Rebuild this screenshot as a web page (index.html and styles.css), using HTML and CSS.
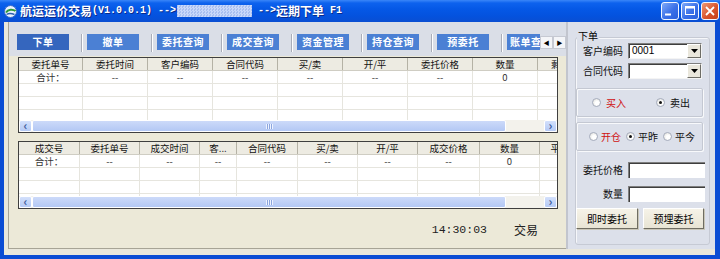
FILE: index.html
```html
<!DOCTYPE html>
<html lang="zh-CN">
<head>
<meta charset="utf-8">
<title>航运运价交易</title>
<link rel="stylesheet" href="styles.css">
</head>
<body>
<div class="window">
  <div class="titlebar">
    <svg class="app-icon" viewBox="0 0 13 13" width="13" height="13">
      <circle cx="6.5" cy="6.5" r="6" fill="#EAF2FF" stroke="#3A6CC8" stroke-width="1"/>
      <path d="M2 7.5 C4 4, 9 4, 11.5 6" fill="none" stroke="#2E9A3A" stroke-width="2"/>
      <path d="M2.5 9.5 C5 8, 8 8.5, 10.5 9.5" fill="none" stroke="#2A5DB0" stroke-width="1.4"/>
    </svg>
    <div class="title">
      <span>航运运价交易</span><span class="m">(V1.0.0.1) --&gt;</span><span class="blur"></span><span class="m">--&gt;</span><span>远期下单</span><span class="m"> F1</span>
    </div>
    <div class="controls">
      <div class="ctl"><svg viewBox="0 0 16 16" width="16" height="16"><rect x="3" y="10.5" width="6" height="2" fill="#fff"/></svg></div>
      <div class="ctl"><svg viewBox="0 0 16 16" width="16" height="16"><rect x="3.5" y="3.5" width="9" height="8" fill="none" stroke="#fff" stroke-width="1"/><rect x="3.5" y="3.5" width="9" height="2" fill="#fff"/></svg></div>
      <div class="ctl close"><svg viewBox="0 0 16 16" width="16" height="16"><path d="M4 4 L12 12 M12 4 L4 12" stroke="#fff" stroke-width="1.8"/></svg></div>
    </div>
  </div>

  <div class="client">
    <div class="main">
      <div class="tabbar">
        <div class="tabs">
          <div class="tab active">下单</div><div class="sep"></div>
          <div class="tab">撤单</div><div class="sep"></div>
          <div class="tab">委托查询</div><div class="sep"></div>
          <div class="tab">成交查询</div><div class="sep"></div>
          <div class="tab">资金管理</div><div class="sep"></div>
          <div class="tab">持仓查询</div><div class="sep"></div>
          <div class="tab">预委托</div><div class="sep"></div>
          <div class="tab last">账单查询</div>
        </div>
        <div class="tabarrows">
          <div class="tarrow">&#9664;</div>
          <div class="tarrow">&#9654;</div>
        </div>
      </div>

      <div class="content">
        <div class="grid g1">
          <div class="ghead">
            <div class="c w64">委托单号</div><div class="c w65">委托时间</div><div class="c w65">客户编码</div><div class="c w65">合同代码</div><div class="c w65">买/卖</div><div class="c w65">开/平</div><div class="c w65">委托价格</div><div class="c w65">数量</div><div class="c w65">剩余数量</div>
          </div>
          <div class="gbody">
            <div class="grow">
              <div class="c w64">合计：</div><div class="c w65">--</div><div class="c w65">--</div><div class="c w65">--</div><div class="c w65">--</div><div class="c w65">--</div><div class="c w65">--</div><div class="c w65">0</div><div class="c w65"></div>
            </div>
            <div class="grow"><div class="c w64"></div><div class="c w65"></div><div class="c w65"></div><div class="c w65"></div><div class="c w65"></div><div class="c w65"></div><div class="c w65"></div><div class="c w65"></div><div class="c w65"></div></div>
            <div class="grow"><div class="c w64"></div><div class="c w65"></div><div class="c w65"></div><div class="c w65"></div><div class="c w65"></div><div class="c w65"></div><div class="c w65"></div><div class="c w65"></div><div class="c w65"></div></div>
            <div class="grow"><div class="c w64"></div><div class="c w65"></div><div class="c w65"></div><div class="c w65"></div><div class="c w65"></div><div class="c w65"></div><div class="c w65"></div><div class="c w65"></div><div class="c w65"></div></div>
          </div>
          <div class="hscroll">
            <div class="sbtn">&lsaquo;</div>
            <div class="thumb"><span class="grip"></span></div>
            <div class="track"></div>
            <div class="sbtn">&rsaquo;</div>
          </div>
        </div>

        <div class="grid g2">
          <div class="ghead">
            <div class="c w61">成交号</div><div class="c w60">委托单号</div><div class="c w60">成交时间</div><div class="c w37">客...</div><div class="c w61">合同代码</div><div class="c w60">买/卖</div><div class="c w60">开/平</div><div class="c w62">成交价格</div><div class="c w60">数量</div><div class="c w60">平仓盈亏</div>
          </div>
          <div class="gbody">
            <div class="grow">
              <div class="c w61">合计：</div><div class="c w60">--</div><div class="c w60">--</div><div class="c w37">--</div><div class="c w61">--</div><div class="c w60">--</div><div class="c w60">--</div><div class="c w62">--</div><div class="c w60">0</div><div class="c w60"></div>
            </div>
            <div class="grow"><div class="c w61"></div><div class="c w60"></div><div class="c w60"></div><div class="c w37"></div><div class="c w61"></div><div class="c w60"></div><div class="c w60"></div><div class="c w62"></div><div class="c w60"></div><div class="c w60"></div></div>
            <div class="grow"><div class="c w61"></div><div class="c w60"></div><div class="c w60"></div><div class="c w37"></div><div class="c w61"></div><div class="c w60"></div><div class="c w60"></div><div class="c w62"></div><div class="c w60"></div><div class="c w60"></div></div>
            <div class="grow"><div class="c w61"></div><div class="c w60"></div><div class="c w60"></div><div class="c w37"></div><div class="c w61"></div><div class="c w60"></div><div class="c w60"></div><div class="c w62"></div><div class="c w60"></div><div class="c w60"></div></div>
          </div>
          <div class="hscroll">
            <div class="sbtn">&lsaquo;</div>
            <div class="thumb"><span class="grip"></span></div>
            <div class="track"></div>
            <div class="sbtn">&rsaquo;</div>
          </div>
        </div>

        <div class="status">
          <span class="clock">14:30:03</span>
          <span class="mode">交易</span>
        </div>
      </div>
    </div>

    <div class="side">
      <div class="group">
        <div class="legend">下单</div>
        <div class="frow r1">
          <label class="lbl">客户编码</label>
          <div class="combo"><span class="cval">0001</span><span class="cbtn"><svg viewBox="0 0 7 4" width="7" height="4"><path d="M0 0 H7 L3.5 4 Z" fill="#000"/></svg></span></div>
        </div>
        <div class="frow r2">
          <label class="lbl">合同代码</label>
          <div class="combo"><span class="cval"></span><span class="cbtn"><svg viewBox="0 0 7 4" width="7" height="4"><path d="M0 0 H7 L3.5 4 Z" fill="#000"/></svg></span></div>
        </div>
        <div class="rbox rb1">
          <span class="radio"></span><span class="rlabel red">买入</span>
          <span class="radio on sp1"></span><span class="rlabel">卖出</span>
        </div>
        <div class="rbox rb2">
          <span class="radio"></span><span class="rlabel red">开仓</span>
          <span class="radio on sp2"></span><span class="rlabel">平昨</span>
          <span class="radio sp2"></span><span class="rlabel">平今</span>
        </div>
        <div class="frow r3">
          <label class="lbl">委托价格</label>
          <div class="input"></div>
        </div>
        <div class="frow r4">
          <label class="lbl">数量</label>
          <div class="input"></div>
        </div>
        <div class="btns">
          <div class="btn b1">即时委托</div>
          <div class="btn b2">预埋委托</div>
        </div>
      </div>
    </div>
  </div>
</div>
</body>
</html>
```

FILE: styles.css
```css
* { box-sizing: border-box; margin: 0; padding: 0; }
html, body { width: 720px; height: 259px; overflow: hidden; }
body {
  font-family: "Noto Sans CJK SC", "Noto Sans", sans-serif;
  font-size: 10px;
  color: #000;
  background: #0B4FD6;
}
.window {
  width: 720px;
  height: 259px;
  display: flex;
  flex-direction: column;
  background: #0A4CD4;
}

/* title bar */
.titlebar {
  height: 22px;
  flex: none;
  display: flex;
  align-items: center;
  padding: 0 1px 0 4px;
  background: linear-gradient(#3A86F8 0, #0D62EE 3px, #0558E6 9px, #0452DE 16px, #0A4ED2 22px);
}
.app-icon { flex: none; display: block; }
.title {
  margin-left: 3px;
  display: flex;
  align-items: center;
  color: #fff;
  font-weight: bold;
  font-size: 12px;
  white-space: nowrap;
  line-height: 22px;
  text-shadow: 1px 1px 0 #0A2A8A;
}
.title .m {
  font-family: "Liberation Mono", monospace;
  font-size: 10px;
  white-space: pre;
}
.blur {
  display: block;
  width: 75px;
  height: 12px;
  margin: 0 6px 0 1px;
  background-color: #B8CCF6;
  background-image: repeating-conic-gradient(#C9D8FA 0 25%, #A9BFF0 0 50%);
  background-size: 3px 3px;
}
.controls { margin-left: auto; display: flex; gap: 2px; }
.ctl {
  width: 18px;
  height: 18px;
  border: 1px solid #F2F6FF;
  border-radius: 3px;
  background: linear-gradient(135deg, #7FA9F8, #3A70E8 55%, #2A5FDC);
  display: flex;
  align-items: center;
  justify-content: center;
}
.ctl svg { display: block; }
.ctl.close { background: linear-gradient(135deg, #EE9A78, #D9552E 55%, #C54019); }

/* client */
.client {
  flex: 1;
  display: flex;
  margin: 0 5px 4px 4px;
  padding: 0 0 6px 4px;
  background: #E9E7DC;
}
.main {
  width: 558px;
  flex: none;
  display: flex;
  flex-direction: column;
  border-left: 1px solid #A7A496;
  border-bottom: 1px solid #A7A496;
  background: #ECE9D8;
}

/* tabs */
.tabbar {
  height: 34px;
  flex: none;
  display: flex;
  align-items: flex-start;
  padding: 12px 0 0 8px;
  background: #DADEE7;
}
.tabs {
  flex: 1;
  display: flex;
  overflow: hidden;
  white-space: nowrap;
}
.tab {
  flex: none;
  width: 52px;
  height: 16px;
  margin-right: 12px;
  background: #4B80D4;
  color: #fff;
  font-weight: bold;
  font-size: 10px;
  line-height: 16px;
  text-align: center;
  letter-spacing: 0.5px;
}
.tab.last { width: 40px; margin-right: 0; text-align: left; padding-left: 3px; overflow: hidden; }
.tab.active { background: #3566BE; }
.sep {
  flex: none;
  width: 2px;
  height: 20px;
  margin-top: -2px;
  margin-right: 4px;
  border-left: 1px solid #A9ADB8;
  border-right: 1px solid #FFFFFF;
}
.tabarrows { flex: none; display: flex; margin-top: 2px; }
.tarrow {
  width: 13px;
  height: 13px;
  border: 1px solid #C6C9D2;
  background: #F4F5F8;
  font-size: 6px;
  line-height: 11px;
  text-align: center;
}

/* grids */
.content {
  flex: 1;
  display: flex;
  flex-direction: column;
  padding: 1px 8px 0 9px;
}
.grid {
  width: 540px;
  display: flex;
  flex-direction: column;
  border: 1px solid #3F3F3F;
  background: #fff;
  overflow: hidden;
}
.g1 { height: 76px; }
.g2 { height: 68px; margin-top: 8px; }
.ghead {
  height: 13px;
  flex: none;
  display: flex;
  background: #EDEBE2;
  border-bottom: 1px solid #CFCDC3;
}
.ghead .c {
  border-right: 1px solid #B5B2A5;
  line-height: 12px;
}
.gbody {
  flex: 1;
  overflow: hidden;
}
.grow {
  height: 13px;
  display: flex;
  border-bottom: 1px solid #E6E5DE;
}
.grow .c {
  border-right: 1px solid #E6E5DE;
  line-height: 12px;
}
.c {
  flex: none;
  font-size: 9.5px;
  text-align: center;
  white-space: nowrap;
  overflow: hidden;
  color: #111;
}
.grow .c { color: #333; }
.w37 { width: 37px; }
.w60 { width: 60px; }
.w61 { width: 61px; }
.w62 { width: 62px; }
.w64 { width: 64px; }
.w65 { width: 65px; }

.hscroll {
  height: 12px;
  flex: none;
  display: flex;
  background: #F3F2EC;
}
.sbtn {
  width: 13px;
  height: 12px;
  flex: none;
  background: linear-gradient(#D3E0FB, #B5CAF5);
  border: 1px solid #FFFFFF;
  border-radius: 2px;
  color: #3D5A9A;
  font-weight: bold;
  font-size: 12px;
  line-height: 8px;
  text-align: center;
}
.thumb {
  width: 474px;
  flex: none;
  display: flex;
  align-items: center;
  justify-content: center;
  background: linear-gradient(#CCDAF9, #B3C8F4);
  border: 1px solid #FFFFFF;
  border-radius: 2px;
}
.grip {
  width: 7px;
  height: 5px;
  background: repeating-linear-gradient(90deg, #EEF3FF 0 1px, #8CA6DE 1px 2px);
}
.track { flex: 1; }

.status {
  flex: 1;
  display: flex;
  align-items: center;
  justify-content: flex-end;
  padding: 2px 20px 0 0;
}
.clock {
  font-family: "Liberation Mono", monospace;
  font-size: 11.5px;
  color: #222;
}
.mode {
  margin-left: 27px;
  font-size: 12px;
  color: #222;
}

/* side panel */
.side {
  flex: 1;
  display: flex;
  padding: 15px 5px 4px 7px;
  background: #DCE0EA;
  border-left: 2px solid #C2C5CE;
}
.group {
  flex: 1;
  position: relative;
  border: 1px solid #C6CAD4;
  border-radius: 3px;
  box-shadow: inset 1px 1px 0 #F6F7FA;
  padding: 5px 4px 0 0;
}
.legend {
  position: absolute;
  top: -8px;
  left: 1px;
  padding: 0 1px;
  background: #DCE0EA;
  font-size: 10px;
  line-height: 12px;
}
.frow {
  display: flex;
  align-items: center;
}
.lbl {
  width: 47px;
  text-align: right;
  font-size: 10px;
  line-height: 12px;
  color: #111;
  flex: none;
}
.r2 { margin-top: 4px; }
.r3 { margin-top: 11px; }
.r4 { margin-top: 8px; }
.combo {
  margin-left: 5px;
  width: 74px;
  height: 16px;
  display: flex;
  background: #fff;
  border-top: 1px solid #7E7E7E;
  border-left: 1px solid #7E7E7E;
  border-right: 1px solid #F4F4F4;
  border-bottom: 1px solid #F4F4F4;
  box-shadow: inset 1px 1px 0 #3E3E3E;
}
.cval {
  flex: 1;
  padding-left: 3px;
  font-family: "Liberation Sans", sans-serif;
  font-size: 10px;
  line-height: 14px;
}
.cbtn {
  width: 14px;
  flex: none;
  display: flex;
  align-items: center;
  justify-content: center;
  background: #EAE7DC;
  border-top: 1px solid #FFFFFF;
  border-left: 1px solid #FFFFFF;
  border-right: 1px solid #6E6D66;
  border-bottom: 1px solid #6E6D66;
}
.cbtn svg { display: block; }
.input {
  margin-left: 5px;
  width: 77px;
  height: 16px;
  background: #fff;
  border-top: 1px solid #7E7E7E;
  border-left: 1px solid #7E7E7E;
  box-shadow: inset 1px 1px 0 #3E3E3E;
}
.rbox {
  width: 127px;
  height: 29px;
  display: flex;
  align-items: center;
  border: 1px solid #C4C8D2;
  border-radius: 2px;
  box-shadow: inset 1px 1px 0 #F8F9FB, 1px 1px 0 #F8F9FB;
}
.rb1 { margin-top: 9px; padding-left: 15px; }
.rb2 { margin-top: 5px; padding-left: 12px; }
.radio {
  width: 9px;
  height: 9px;
  flex: none;
  border-radius: 50%;
  border: 1px solid #A6ADBD;
  background: radial-gradient(circle at 60% 60%, #FFFFFF 30%, #DADAD3 100%);
  position: relative;
}
.radio.on::after {
  content: "";
  position: absolute;
  left: 2px;
  top: 2px;
  width: 3px;
  height: 3px;
  border-radius: 50%;
  background: #111;
}
.rlabel {
  margin-left: 5px;
  font-size: 10px;
  color: #111;
}
.rlabel.red { color: #D01010; }
.sp1 { margin-left: 30px; }
.rb2 .rlabel { margin-left: 3px; }
.sp2 { margin-left: 5px; }
.btns {
  display: flex;
  gap: 5px;
  margin-top: 6px;
}
.btn {
  width: 62px;
  height: 21px;
  background: linear-gradient(#F6F3E8, #E8E4D4);
  border-top: 1px solid #FFFFFF;
  border-left: 1px solid #FFFFFF;
  border-right: 1px solid #6F6D62;
  border-bottom: 1px solid #6F6D62;
  box-shadow: 1px 1px 0 #C9C6B8;
  font-size: 10px;
  line-height: 19px;
  text-align: center;
}
.b2 { width: 61px; }
```
